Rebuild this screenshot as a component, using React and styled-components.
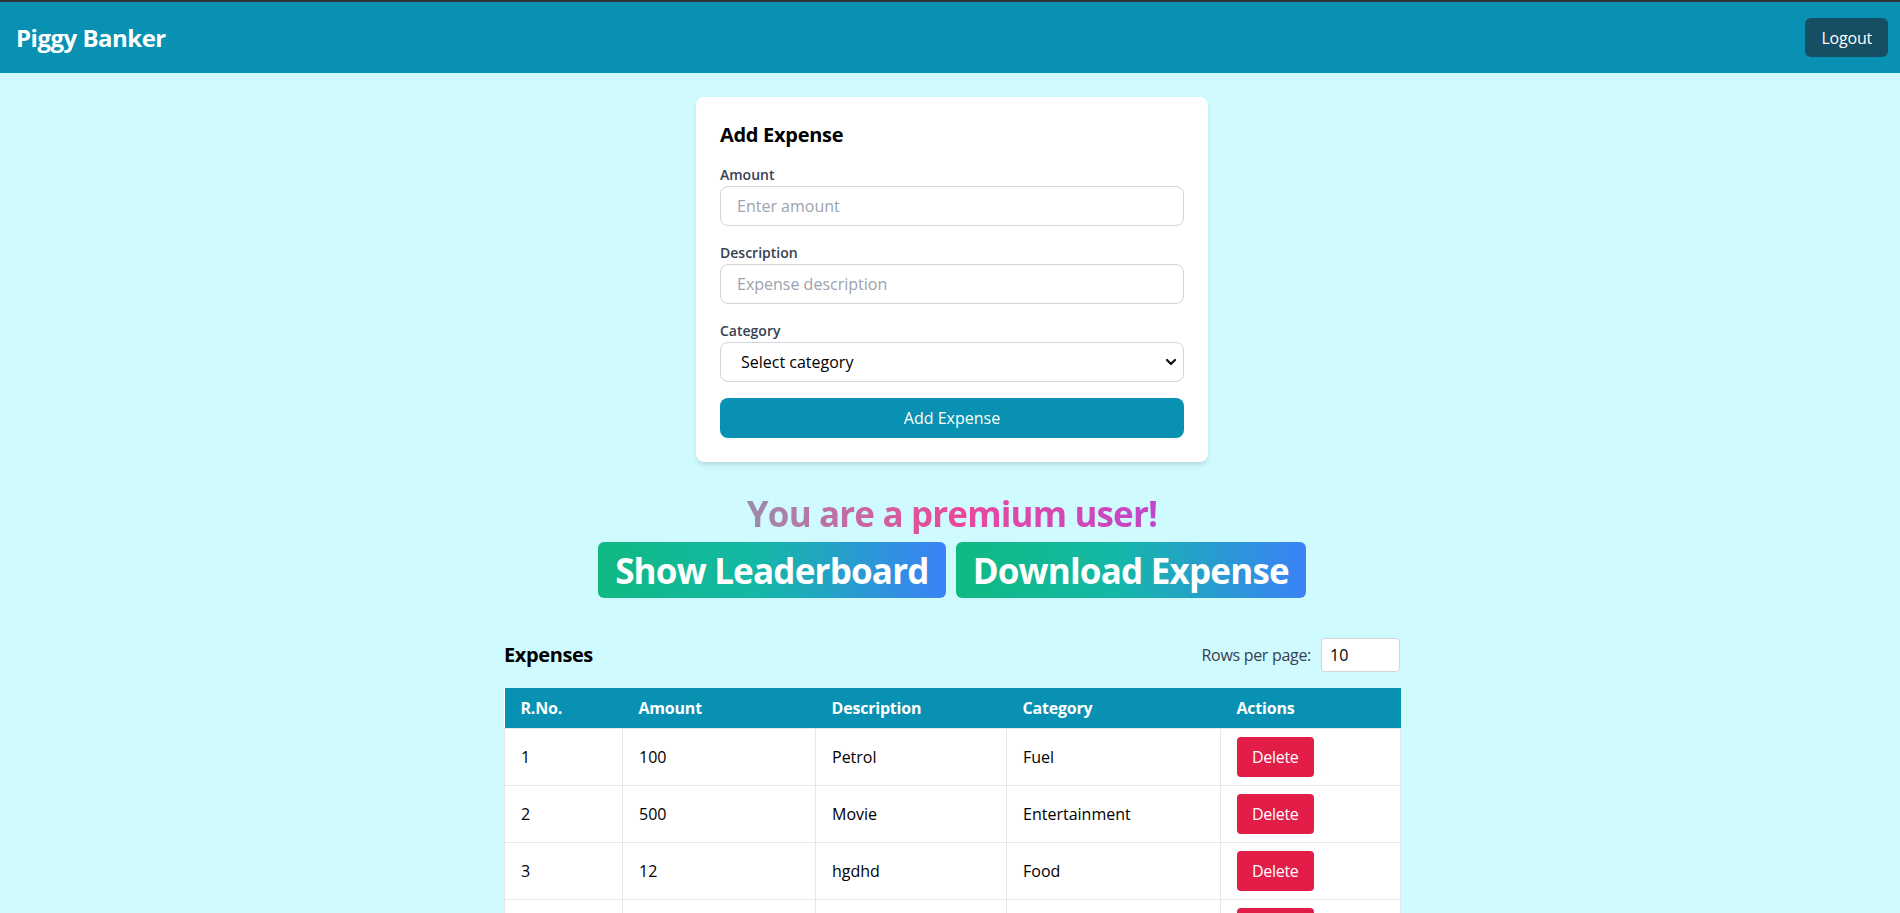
import React from 'react'
import styled, { createGlobalStyle } from 'styled-components'

const GlobalStyle = createGlobalStyle`
  * {
    box-sizing: border-box;
  }
  html, body {
    margin: 0;
    padding: 0;
    overflow: hidden;
  }
  body {
    background: #cffafe;
    font-family: 'Open Sans', 'Noto Sans', sans-serif;
    color: #000;
  }
`

const Page = styled.div`
  width: 1904px;
  min-height: 913px;
  background: #cffafe;
`

const Navbar = styled.header`
  display: flex;
  align-items: center;
  justify-content: space-between;
  background: #0891b2;
  border-top: 2px solid #2f3336;
  padding: 16px;
`

const Brand = styled.h1`
  margin: 0;
  font-size: 24px;
  line-height: 32px;
  font-weight: 700;
  letter-spacing: -0.5px;
  color: #fff;
`

const LogoutButton = styled.button`
  height: 39px;
  padding: 0 16px;
  border: none;
  border-radius: 6px;
  background: #164e63;
  color: #fff;
  font-family: inherit;
  font-size: 16px;
  letter-spacing: -0.2px;
`

const Main = styled.main`
  display: flex;
  flex-direction: column;
  align-items: center;
  padding: 24px 0 40px;
`

const Card = styled.form`
  width: 512px;
  padding: 24px;
  background: #fff;
  border-radius: 8px;
  box-shadow: 0 4px 6px -1px rgba(0, 0, 0, 0.1), 0 2px 4px -2px rgba(0, 0, 0, 0.1);
`

const CardTitle = styled.h2`
  margin: 0 0 16px;
  font-size: 20px;
  line-height: 28px;
  font-weight: 700;
  letter-spacing: -0.3px;
`

const Field = styled.div`
  margin-bottom: ${p => (p.$last ? '16px' : '17px')};
`

const Label = styled.label`
  display: block;
  margin-bottom: 1px;
  font-size: 14px;
  line-height: 20px;
  font-weight: 600;
  color: #374151;
`

const TextInput = styled.input`
  display: block;
  width: 100%;
  height: 40px;
  padding: 0 16px;
  border: 1px solid #d1d5db;
  border-radius: 8px;
  font-family: inherit;
  font-size: 16px;
  color: #000;
  background: #fff;
  &::placeholder {
    color: #9ca3af;
  }
`

const SelectWrap = styled.div`
  position: relative;
`

const Select = styled.select`
  display: block;
  width: 100%;
  height: 40px;
  padding: 0 16px 0 20px;
  border: 1px solid #d1d5db;
  border-radius: 8px;
  background: #fff;
  font-family: inherit;
  font-size: 16px;
  color: #000;
  appearance: none;
`

const Chevron = styled.svg`
  position: absolute;
  right: 7px;
  top: 15px;
  width: 12px;
  height: 10px;
  pointer-events: none;
`

const SubmitButton = styled.button`
  display: block;
  width: 100%;
  height: 40px;
  border: none;
  border-radius: 8px;
  background: #0891b2;
  color: #fff;
  font-family: inherit;
  font-size: 16px;
`

const Premium = styled.section`
  display: flex;
  flex-direction: column;
  align-items: center;
  margin-top: 32px;
`

const PremiumText = styled.h2`
  display: inline-block;
  margin: 0;
  font-size: 35px;
  line-height: 40px;
  font-weight: 700;
  letter-spacing: -0.85px;
  background: linear-gradient(to right, #9c8cad, #ec4899 50%, #c146cc);
  -webkit-background-clip: text;
  background-clip: text;
  color: transparent;
`

const ActionRow = styled.div`
  display: flex;
  gap: 10px;
  margin-top: 8px;
`

const GradientButton = styled.button`
  height: 56px;
  padding: 0 17px;
  border: none;
  border-radius: 6px;
  background: linear-gradient(to right, #10b981, #14b8a6 45%, #3b82f6);
  color: #fff;
  font-family: inherit;
  font-size: 35px;
  font-weight: 700;
  letter-spacing: -0.8px;
`

const TableSection = styled.section`
  width: 896px;
  margin-top: 40px;
`

const TableHeader = styled.div`
  display: flex;
  align-items: center;
  justify-content: space-between;
  margin-bottom: 16px;
`

const SectionTitle = styled.h3`
  margin: 0;
  font-size: 20px;
  line-height: 28px;
  font-weight: 700;
  letter-spacing: -0.4px;
`

const RowsControl = styled.label`
  display: flex;
  align-items: center;
  gap: 10px;
  font-size: 16px;
  letter-spacing: -0.3px;
  color: #374151;
`

const RowsInput = styled.input`
  width: 79px;
  height: 34px;
  padding: 0 8px;
  border: 1px solid #d1d5db;
  border-radius: 4px;
  font-family: inherit;
  font-size: 16px;
  color: #000;
  background: #fff;
`

const Table = styled.table`
  width: 100%;
  table-layout: fixed;
  border-collapse: collapse;
  background: #fff;
`

const Th = styled.th`
  width: ${p => p.$w}px;
  height: 40px;
  padding: 0 16px;
  background: #0891b2;
  color: #fff;
  text-align: left;
  font-size: 16px;
  font-weight: 700;
  letter-spacing: -0.2px;
`

const Td = styled.td`
  height: 57px;
  padding: 0 16px;
  border: 1px solid #e5e7eb;
  font-size: 16px;
  color: #000;
`

const DeleteButton = styled.button`
  height: 40px;
  padding: 0 15px;
  border: none;
  border-radius: 4px;
  background: #e11d48;
  color: #fff;
  font-family: inherit;
  font-size: 16px;
  letter-spacing: -0.3px;
`

const columns = [
  { label: 'R.No.', w: 118 },
  { label: 'Amount', w: 193 },
  { label: 'Description', w: 191 },
  { label: 'Category', w: 214 },
  { label: 'Actions', w: 180 },
]

const expenses = [
  { amount: 100, description: 'Petrol', category: 'Fuel' },
  { amount: 500, description: 'Movie', category: 'Entertainment' },
  { amount: 12, description: 'hgdhd', category: 'Food' },
  { amount: 250, description: 'Groceries', category: 'Food' },
]

export default function App() {
  return (
    <Page>
      <GlobalStyle />
      <Navbar>
        <Brand>Piggy Banker</Brand>
        <LogoutButton>Logout</LogoutButton>
      </Navbar>
      <Main>
        <Card onSubmit={e => e.preventDefault()}>
          <CardTitle>Add Expense</CardTitle>
          <Field>
            <Label>Amount</Label>
            <TextInput type="number" placeholder="Enter amount" />
          </Field>
          <Field>
            <Label>Description</Label>
            <TextInput type="text" placeholder="Expense description" />
          </Field>
          <Field $last>
            <Label>Category</Label>
            <SelectWrap>
              <Select defaultValue="">
                <option value="">Select category</option>
                <option value="Food">Food</option>
                <option value="Fuel">Fuel</option>
                <option value="Entertainment">Entertainment</option>
              </Select>
              <Chevron viewBox="0 0 12 10">
                <path d="M2 3 L6 7 L10 3" fill="none" stroke="#111" strokeWidth="2.2" strokeLinecap="round" strokeLinejoin="round" />
              </Chevron>
            </SelectWrap>
          </Field>
          <SubmitButton type="submit">Add Expense</SubmitButton>
        </Card>

        <Premium>
          <PremiumText>You are a premium user!</PremiumText>
          <ActionRow>
            <GradientButton>Show Leaderboard</GradientButton>
            <GradientButton>Download Expense</GradientButton>
          </ActionRow>
        </Premium>

        <TableSection>
          <TableHeader>
            <SectionTitle>Expenses</SectionTitle>
            <RowsControl>
              Rows per page:
              <RowsInput type="number" defaultValue={10} />
            </RowsControl>
          </TableHeader>
          <Table>
            <thead>
              <tr>
                {columns.map(c => (
                  <Th key={c.label} $w={c.w}>{c.label}</Th>
                ))}
              </tr>
            </thead>
            <tbody>
              {expenses.map((x, i) => (
                <tr key={i}>
                  <Td>{i + 1}</Td>
                  <Td>{x.amount}</Td>
                  <Td>{x.description}</Td>
                  <Td>{x.category}</Td>
                  <Td>
                    <DeleteButton>Delete</DeleteButton>
                  </Td>
                </tr>
              ))}
            </tbody>
          </Table>
        </TableSection>
      </Main>
    </Page>
  )
}
